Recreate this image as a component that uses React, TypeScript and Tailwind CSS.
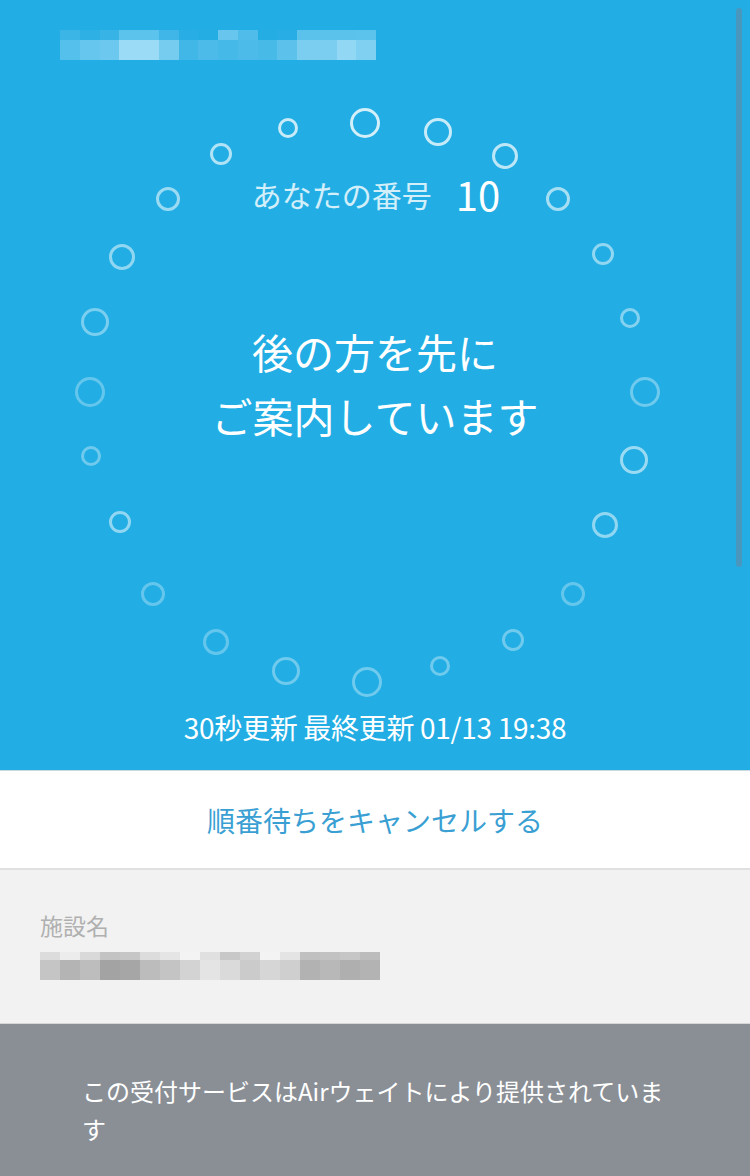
import React from "react";

const titleRow1 = ["#3bb4e6","#2fb0e4","#38b3e6","#5cc3ec","#5cc3ec","#40b6e8","#28aee4","#24ade3","#68c6ee","#4fbce9","#24ade3","#28aee4","#5bc2ec","#5bc2ec","#5bc2ec","#5cc3ec"];
const titleRow2 = ["#55c0eb","#66c6ed","#6cc8ee","#9bdbf5","#9bdbf5","#75ccef","#41b7e7","#4cbbe9","#45b9e8","#4cbbe9","#48bae8","#5cc1eb","#7ccef0","#7ccef0","#92d8f4","#80d0f1"];

const facRow1 = ["#dcdcdc","#ececec","#d9d9d9","#c3c3c3","#c6c6c6","#dcdcdc","#e5e5e5","#f3f3f3","#e0e0e0","#c8c8c8","#d2d2d2","#f3f3f3","#e4e4e4","#c0c0c0","#c2c2c2","#c6c6c6","#bcbcbc"];
const facRow2 = ["#c5c5c5","#b4b4b4","#bdbdbd","#a3a3a3","#a6a6a6","#bcbcbc","#c4c4c4","#d3d3d3","#e4e4e4","#dadada","#cbcbcb","#d6d6d6","#cfcfcf","#b2b2b2","#b8b8b8","#afafaf","#b3b3b3"];

const circles: [number, number, number, number][] = [
  [288, 128, 8.5, 0.75],
  [365, 123, 13.5, 0.8],
  [438, 132, 12.5, 0.75],
  [505, 156, 11.5, 0.7],
  [558, 199, 10.5, 0.6],
  [603, 254, 9.5, 0.5],
  [630, 318, 8.5, 0.45],
  [645, 392, 13.5, 0.35],
  [634, 460, 12.5, 0.55],
  [605, 525, 11.5, 0.5],
  [573, 594, 10.5, 0.3],
  [513, 640, 9.5, 0.35],
  [440, 666, 8.5, 0.35],
  [367, 682, 13.5, 0.35],
  [286, 671, 12.5, 0.35],
  [216, 642, 11.5, 0.3],
  [153, 594, 10.5, 0.3],
  [120, 522, 9.5, 0.5],
  [91, 456, 8.5, 0.35],
  [90, 392, 13.5, 0.3],
  [95, 322, 12.5, 0.4],
  [122, 257, 11.5, 0.5],
  [168, 199, 10.5, 0.55],
  [221, 154, 9.5, 0.65],
];

function Pixelated({ row1, row2, cell, h1, h2 }: { row1: string[]; row2: string[]; cell: number; h1: number; h2: number }) {
  return (
    <div className="flex flex-col">
      <div className="flex">
        {row1.map((c, i) => (
          <div key={i} style={{ background: c, width: cell, height: h1 }} />
        ))}
      </div>
      <div className="flex">
        {row2.map((c, i) => (
          <div key={i} style={{ background: c, width: cell, height: h2 }} />
        ))}
      </div>
    </div>
  );
}

export default function App() {
  return (
    <div
      className="w-[750px] min-h-[1176px] bg-[#8a8f96] overflow-hidden"
      style={{ fontFamily: '"Noto Sans CJK JP", "Noto Sans", sans-serif' }}
    >
      {/* Blue status area */}
      <section className="relative h-[771px] bg-[#22aee4] border-b border-[#c9d9e0] flex flex-col">
        <svg className="absolute inset-0 pointer-events-none" width="750" height="770" viewBox="0 0 750 770">
          {circles.map(([x, y, r, o], i) => (
            <circle key={i} cx={x} cy={y} r={r} fill="none" stroke="#ffffff" strokeWidth="3" opacity={o} />
          ))}
        </svg>
        <div className="absolute right-[8px] top-[8px] w-[6px] h-[559px] rounded-full bg-[#4a97be]" />

        <div className="relative mt-[30px] ml-[60px]">
          <Pixelated row1={titleRow1} row2={titleRow2} cell={19.75} h1={10} h2={20} />
        </div>

        <div className="relative mt-[114px] h-[40px] flex items-center justify-center gap-[24px] pl-[2px]">
          <span className="text-[30px] leading-[40px] text-white/80">あなたの番号</span>
          <span className="text-[40px] leading-[40px] text-white">10</span>
        </div>

        <div className="relative mt-[105px] text-center text-white text-[41px] leading-[64px]">
          <p>後の方を先に</p>
          <p>ご案内しています</p>
        </div>

        <div className="relative mt-auto mb-[25px] text-center text-white text-[28px] leading-[36px] tracking-[-0.3px]">
          30秒更新 最終更新 01/13 19:38
        </div>
      </section>

      {/* Cancel */}
      <div className="h-[99px] bg-white border-b-2 border-[#e0e0e0] flex items-center justify-center">
        <span className="text-[28px] text-[#3a9fd3]">順番待ちをキャンセルする</span>
      </div>

      {/* Facility */}
      <div className="h-[154px] bg-[#f2f2f2] pl-[40px] pt-[40px] border-b border-[#d6d6d6]">
        <div className="text-[23px] leading-[30px] text-[#b0b0b0]">施設名</div>
        <div className="mt-[12px]">
          <Pixelated row1={facRow1} row2={facRow2} cell={20} h1={8} h2={20} />
        </div>
      </div>

      {/* Footer */}
      <footer className="pl-[82px] pr-[70px] pt-[48px] pb-[40px]">
        <p className="text-[24px] leading-[38px] text-white">
          この受付サービスはAirウェイトにより提供されています
        </p>
      </footer>
    </div>
  );
}
